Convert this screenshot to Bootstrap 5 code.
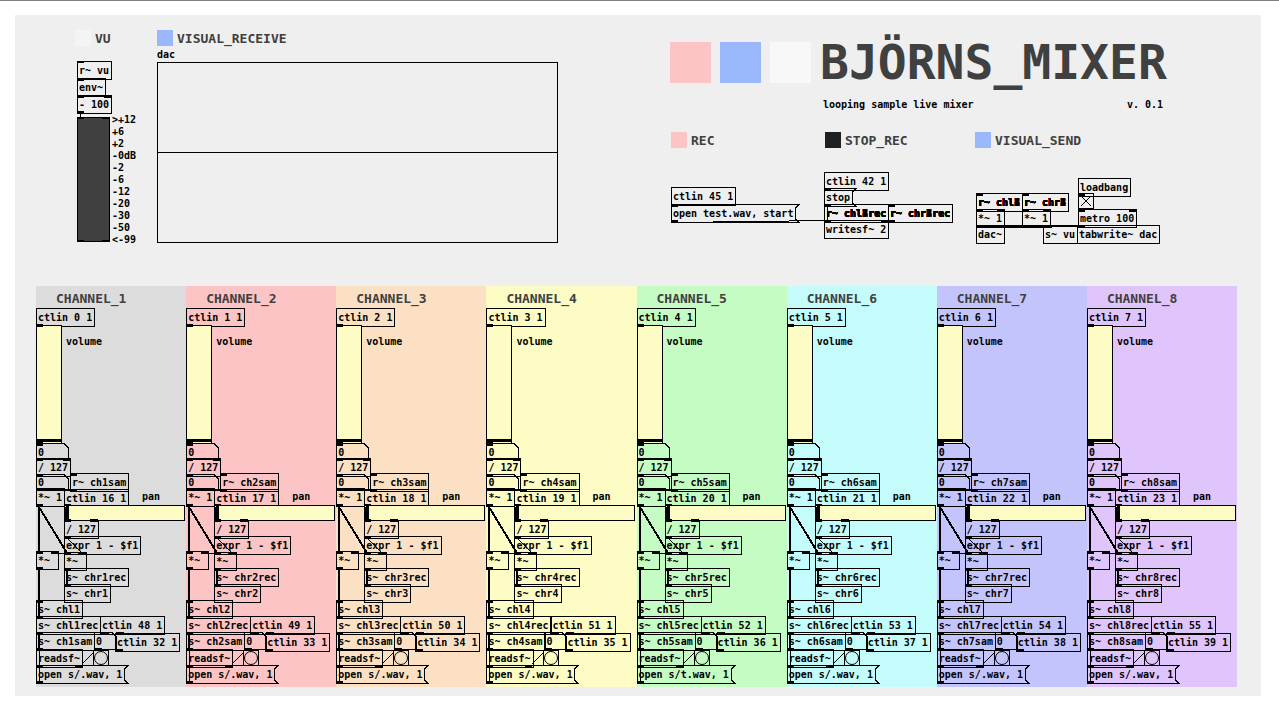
<!DOCTYPE html>
<html lang="en">
<head>
<meta charset="utf-8">
<meta name="viewport" content="width=device-width, initial-scale=1">
<title>BJÖRNS_MIXER</title>
<link href="https://cdn.jsdelivr.net/npm/bootstrap@5.3.0/dist/css/bootstrap.min.css" rel="stylesheet">
<style>
  :root { --ink: #404040; --paper: #efefef; --cream: #fcfcc4; --rose: #fcc4c4; --sky: #9cb8fc; }
  body { background: #fff; border-top: 1px solid #808080; color: #000;
    font: bold 10px/17px "DejaVu Sans Mono", monospace; }
  .patch { background: var(--paper); margin: 14px 18px 0 15px; padding: 0 24px 9px 21px; }
  .top-area { height: 271px; padding-top: 15px; }
  .vu-part { width: 82px; margin-left: 39px; }
  .scope-part { width: 401px; margin-right: 112px; }
  .tag { display: flex; align-items: center; gap: 4px; height: 16px; margin: 0;
    font-size: 13px; font-weight: bold; line-height: 18px; color: var(--ink); white-space: nowrap; }
  .tag-text { padding-top: 2px; }
  .swatch { width: 16px; height: 16px; }
  .swatch-lg { width: 41px; height: 41px; }
  .fill-rose { background: var(--rose); }
  .fill-sky { background: var(--sky); }
  .fill-white { background: #f8f8f8; }
  .fill-pale { background: #f4f4f4; }
  .fill-dark { background: #202020; }
  .app-title { font-size: 48px; font-weight: bold; line-height: 41px; color: var(--ink); margin: 0; white-space: nowrap; }
  .brand-row { gap: 9px; margin-top: 12px; height: 54px; }
  .sub-row { padding-left: 153px; width: 493px; }
  .parts { display: grid; grid-template-columns: 154px 150px 1fr; padding-left: 1px; margin-top: 19px; }
  .graph { height: 181px; border: 1px solid #000; }
  .graph-half { height: 90px; border-bottom: 1px solid #000; }
  .caption { height: 16px; line-height: 17px; }
  .sheet { position: relative; }
  .vu-sheet { height: 185px; margin: 15px 0 0 2px; }
  .scale { position: absolute; left: 35px; top: 53px; margin: 0; padding: 0; list-style: none; line-height: 12px; }
  .node { position: absolute; height: 19px; border: 1px solid #000; padding: 0 2px 0 1px; margin: 0; white-space: pre; line-height: 17px; }
  .msg { position: absolute; height: 19px; border: 0; background: none; padding: 0 2px; font: inherit; color: inherit; white-space: pre; }
  .num { position: absolute; border: 0; border-radius: 0; background: none; padding: 0 2px; font: inherit; color: inherit; outline: 0; }
  .note { position: absolute; white-space: pre; }
  .wires { position: absolute; left: 0; top: 0; overflow: visible; pointer-events: none; fill: none; stroke: #000; shape-rendering: crispEdges; }
  .fader { position: absolute; appearance: none; -webkit-appearance: none; margin: 0; padding: 0 1px; background: var(--cream); border: 1px solid #000; }
  .fader::-webkit-slider-thumb { -webkit-appearance: none; width: 3px; height: 24px; background: #000; border: 0; border-radius: 0; }
  .fader-v { width: 119px; height: 26px; transform: rotate(-90deg); transform-origin: 0 0; }
  .fader-h { width: 121px; height: 16px; }
  .fader-h::-webkit-slider-thumb { height: 14px; }
  .bang { position: absolute; width: 16px; height: 16px; border: 1px solid #000; background: none; padding: 0; display: flex; }
  .bang svg { margin: auto; }
  .tgl { position: absolute; appearance: none; -webkit-appearance: none; width: 16px; height: 16px; margin: 0; border: 1px solid #000; background: none; }
  .meter-box { position: absolute; width: 33px; height: 125px; background: var(--ink); border: 1px solid #000; }
  .strip { height: 401px; padding-left: 20px; }
  .strip .tag { padding-top: 3px; height: 22px; }
  .strip .sheet-layer { position: absolute; inset: 0; }
  .c1 { background: #dcdcdc; } .c2 { background: #fcc4c4; } .c3 { background: #fce0c4; } .c4 { background: #fcfcc4; }
  .c5 { background: #c4fcc4; } .c6 { background: #c4fcfc; } .c7 { background: #c4c4fc; } .c8 { background: #e0c4fc; }
</style>
</head>
<body>
<main class="patch">
  <div class="top-area d-flex">
    <section class="vu-part flex-shrink-0">
      <h2 class="tag"><span class="swatch fill-pale"></span><span class="tag-text">VU</span></h2>
      <div class="sheet vu-sheet" id="vu">
        <ul class="scale"><li>&gt;+12</li><li>+6</li><li>+2</li><li>-0dB</li><li>-2</li><li>-6</li><li>-12</li><li>-20</li><li>-30</li><li>-50</li><li>&lt;-99</li></ul>
      </div>
    </section>
    <section class="scope-part flex-shrink-0">
      <h2 class="tag"><span class="swatch fill-sky"></span><span class="tag-text">VISUAL_RECEIVE</span></h2>
      <div class="caption">dac</div>
      <div class="graph"><div class="graph-half"></div></div>
    </section>
    <section class="flex-grow-1">
      <div class="brand-row d-flex align-items-start">
        <span class="swatch-lg fill-rose"></span><span class="swatch-lg fill-sky"></span><span class="swatch-lg fill-white"></span>
        <h1 class="app-title">BJÖRNS_MIXER</h1>
      </div>
      <div class="sub-row d-flex justify-content-between"><span>looping sample live mixer</span><span>v. 0.1</span></div>
      <div class="parts">
        <section><h2 class="tag"><span class="swatch fill-rose"></span><span class="tag-text">REC</span></h2><div class="sheet" id="rec"></div></section>
        <section><h2 class="tag"><span class="swatch fill-dark"></span><span class="tag-text">STOP_REC</span></h2><div class="sheet" id="stop"></div></section>
        <section><h2 class="tag"><span class="swatch fill-sky"></span><span class="tag-text">VISUAL_SEND</span></h2><div class="sheet" id="send"></div></section>
      </div>
    </section>
  </div>
  <div class="d-flex" id="channels"></div>
</main>
<script>
  // Patch objects: [x, y, text]. The box grows with its text.
  const at = (x, y) => `style="left:${x}px;top:${y}px"`;
  const obj = ([x, y, t]) => `<div class="node" ${at(x, y)}>${t}</div>`;
  const msg = ([x, y, t]) => `<button type="button" class="msg" ${at(x, y)}>${t}</button>`;
  const num = (x, y, w, h, label) => `<input class="num" aria-label="${label}" value="0" style="left:${x}px;top:${y}px;width:${w}px;height:${h}px">`;
  // Outlines and connections
  const flag = ([x, y, t]) => { const w = t.length * 6 + 8; return `<path d="M${x + w} ${y + .5}H${x + .5}v18H${x + w}l-4 -4v-10z"/>`; };
  const cut = (x, y, w, h) => `<path d="M${x + .5} ${y + .5}H${x + w - 5}l4.500 4.500V${y + h - .5}H${x + .5}z"/>`;
  const blocks = list => list.map(([x, y, w, h]) => `<rect x="${x}" y="${y}" width="${w}" height="${h}" fill="#000" stroke="none"/>`).join('');
  const wires = inner => `<svg class="wires" width="1" height="1" aria-hidden="true">${inner}</svg>`;
  const put = (id, html) => document.getElementById(id).insertAdjacentHTML('beforeend', html);
  const eight = [1, 2, 3, 4, 5, 6, 7, 8];

  // VU
  put('vu', [[0, 0, 'r~ vu'], [0, 17, 'env~'], [0, 34, '- 100']].map(obj).join('') +
    `<div class="meter-box" ${at(0, 56)}></div>` +
    wires(blocks([[0, 0, 7, 2], [0, 17, 7, 3], [7, 17, 22, 2], [0, 34, 7, 3], [7, 34, 21, 2], [27, 34, 8, 3], [0, 50, 7, 3], [3, 52, 1, 5], [0, 56, 7, 2], [25, 56, 8, 2], [0, 179, 7, 2], [25, 179, 8, 2]])));

  // Recorder
  const recMsg = [0, 56, 'open test.wav, start'];
  put('rec', obj([0, 39, 'ctlin 45 1']) + msg(recMsg) +
    wires(flag(recMsg) + blocks([[0, 56, 7, 3], [7, 56, 58, 2], [0, 72, 7, 3], [42, 73, 76, 2], [118, 72, 38, 1]])));
  const stopMsg = [-1, 40, 'stop'];
  put('stop', obj([-1, 24, 'ctlin 42 1']) + msg(stopMsg) +
    eight.map(n => obj([-1, 56, `r~ chl${n}rec`]) + obj([63, 56, `r~ chr${n}rec`])).join('') + obj([-1, 72, 'writesf~ 2']) +
    wires(flag(stopMsg) + blocks([[-1, 40, 7, 3], [-1, 56, 7, 3], [2, 58, 1, 15], [63, 56, 7, 3], [-1, 72, 7, 3], [56, 72, 14, 3]])));

  // Output
  put('send', eight.map(n => obj([1, 45, `r~ chl${n}`]) + obj([47, 45, `r~ chr${n}`])).join('') +
    [[1, 61, '*~ 1'], [47, 61, '*~ 1'], [1, 77, 'dac~'], [68, 77, 's~ vu'], [102, 77, 'tabwrite~ dac'], [103, 30, 'loadbang'], [103, 61, 'metro 100']].map(obj).join('') +
    `<input type="checkbox" class="tgl" aria-label="metro on" checked ${at(103, 45)}>` +
    wires('<path d="M106 48l10 10M116 48l-10 10"/>' +
      blocks([[1, 45, 7, 3], [47, 45, 7, 3], [1, 61, 7, 3], [22, 61, 7, 3], [47, 61, 7, 3], [68, 61, 7, 3], [1, 77, 76, 3], [77, 77, 33, 2], [103, 45, 7, 3], [103, 60, 7, 4], [154, 61, 7, 3]])));

  // Channel strips
  const channel = n => {
    const open = [0, 379, n === 5 ? 'open s/t.wav, 1' : 'open s/.wav, 1'];
    const boxes = [
      [0, 22, `ctlin ${n - 1} 1`], [0, 172, '/ 127'], [34, 187, `r~ ch${n}sam`], [0, 202, '*~ 1'],
      [28, 203, `ctlin ${n + 15} 1`], [28, 234, '/ 127'], [28, 250, 'expr 1 - $f1'],
      [0, 265, '*~ '], [28, 266, '*~ '], [28, 282, `s~ chr${n}rec`], [28, 298, `s~ chr${n}`],
      [0, 314, `s~ chl${n}`], [0, 330, `s~ chl${n}rec`], [64, 330, `ctlin ${n + 47} 1`],
      [0, 346, `s~ ch${n}sam`], [79, 347, `ctlin ${n + 31} 1`], [0, 363, 'readsf~']
    ];
    return `<section class="strip sheet flex-fill c${n}"><h2 class="tag">CHANNEL_${n}</h2><div class="sheet-layer">
      ${boxes.map(obj).join('')}
      <label class="note" for="vol${n}" ${at(30, 47)}>volume</label>
      <input type="range" id="vol${n}" class="fader fader-v" min="0" max="127" value="0" ${at(0, 158)}>
      <label class="note" for="pan${n}" ${at(106, 202)}>pan</label>
      <input type="range" id="pan${n}" class="fader fader-h" min="0" max="127" value="0" ${at(28, 219)}>
      ${num(0, 157, 33, 18, 'volume value')}${num(0, 188, 33, 17, 'gain value')}${num(58, 347, 22, 17, 'loop value')}
      <button type="button" class="bang" aria-label="bang" ${at(57, 364)}><svg width="14" height="14"><circle cx="7" cy="7" r="6.500" fill="none" stroke="#000"/></svg></button>
      ${msg(open)}
      ${wires(flag(open) + cut(0, 157, 33, 17) + cut(0, 188, 33, 16) + cut(58, 346, 23, 18) +
        '<path d="M3 221L31 267" stroke-width="2"/><path d="M31 252L46 267M22 267H28M46 378L58 366"/>' +
        blocks([[0, 38, 7, 3], [0, 156, 7, 4], [0, 172, 7, 3], [27, 172, 7, 3], [0, 188, 7, 3], [34, 187, 7, 3],
          [0, 203, 28, 2], [28, 203, 13, 2], [0, 218, 7, 3], [28, 218, 7, 2], [29, 221, 3, 13], [28, 233, 7, 3], [54, 233, 8, 3], [28, 250, 7, 3],
          [2, 219, 2, 48], [0, 265, 7, 3], [15, 265, 7, 3], [0, 281, 7, 3], [28, 266, 7, 2], [42, 266, 8, 2], [28, 282, 7, 2], [30, 284, 2, 14], [28, 298, 7, 2],
          [2, 284, 2, 46], [0, 314, 7, 3], [0, 330, 7, 2], [0, 346, 7, 3], [64, 346, 9, 2], [80, 346, 8, 2], [2, 349, 2, 15], [0, 362, 7, 3],
          [58, 362, 8, 3], [79, 363, 8, 2], [3, 364, 1, 32], [0, 379, 7, 2], [39, 379, 7, 2], [0, 395, 7, 3]]))}
    </div></section>`;
  };
  put('channels', eight.map(channel).join(''));
</script>
<script src="https://cdn.jsdelivr.net/npm/bootstrap@5.3.0/dist/js/bootstrap.bundle.min.js"></script>
</body>
</html>
